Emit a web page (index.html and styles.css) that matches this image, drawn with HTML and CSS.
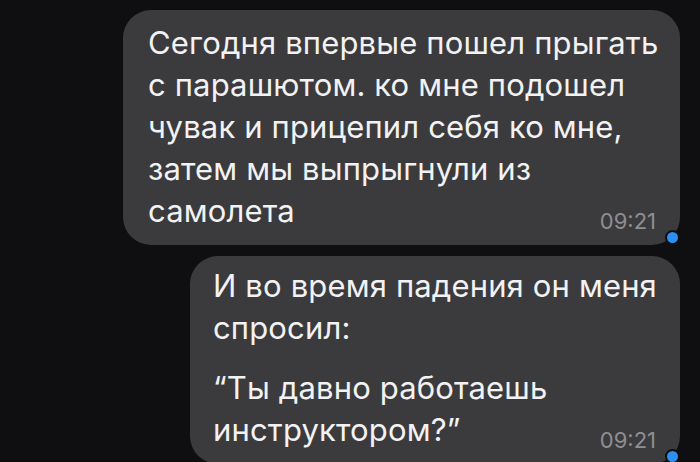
FILE: index.html
```html
<!DOCTYPE html>
<html lang="ru">
<head>
    <meta charset="UTF-8">
    <meta name="viewport" content="width=device-width, initial-scale=1.0">
    <title>Чат</title>
    <link rel="stylesheet" href="styles.css">
</head>
<body>
    <div class="chat">
        <div class="msg msg-first">
            <p class="msg-text">Сегодня впервые пошел прыгать<br>с парашютом. ко мне подошел<br>чувак и прицепил себя ко мне,<br>затем мы выпрыгнули из</p>
            <div class="last-row">
                <span class="msg-text">самолета</span>
                <span class="time">09:21</span>
            </div>
            <span class="dot"></span>
        </div>

        <div class="msg msg-second">
            <p class="msg-text">И во время падения он меня<br>спросил:</p>
            <p class="msg-text quote">“Ты давно работаешь</p>
            <div class="last-row">
                <span class="msg-text">инструктором?”</span>
                <span class="time">09:21</span>
            </div>
            <span class="dot"></span>
        </div>
    </div>
</body>
</html>
```

FILE: styles.css
```css
body {
    margin: 0;
    background-color: #0f0f11;
    font-family: Inter, "Noto Sans", sans-serif;
    color: #f2f2f4;
}
.chat {
    display: flex;
    flex-direction: column;
    align-items: flex-end;
    gap: 11px;
    padding: 10px 20px 0 0;
}
.msg {
    position: relative;
    background: #3b3b3d;
    border-radius: 28px;
    box-sizing: border-box;
}
.msg-first {
    width: 557px;
    padding: 12px 24px 13px 25px;
}
.msg-second {
    width: 490px;
    padding: 9px 24px 13px 23px;
}
.msg-text {
    margin: 0;
    font-size: 31px;
    line-height: 42px;
    letter-spacing: 0.15px;
    white-space: nowrap;
}
.quote {
    margin-top: 18px;
}
.last-row {
    display: flex;
    justify-content: space-between;
    align-items: flex-end;
}
.time {
    font-size: 22px;
    line-height: 21px;
    color: #8e8e93;
}
.dot {
    position: absolute;
    right: 0;
    bottom: 0;
    width: 11px;
    height: 11px;
    border-radius: 50%;
    background: #2d8ff0;
    border: 2px solid #0f0f11;
}
```
